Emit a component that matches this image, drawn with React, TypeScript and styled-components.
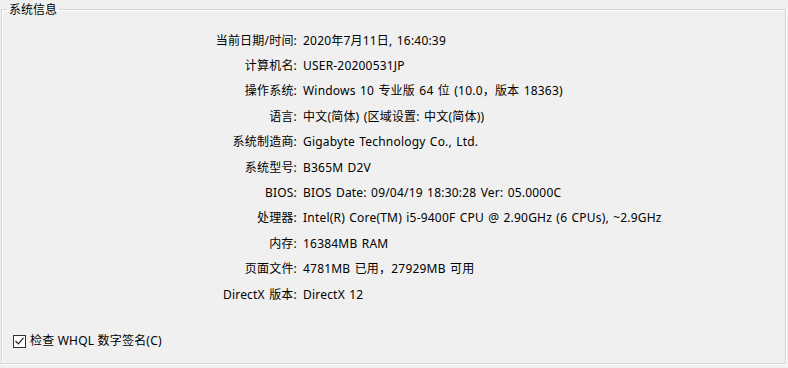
import { Fragment } from "react";
import styled, { createGlobalStyle } from "styled-components";

const GlobalStyle = createGlobalStyle`
    html, body {
        margin: 0;
        padding: 0;
        background: #f0f0f0;
    }
    body {
        width: 788px;
        height: 368px;
        overflow: hidden;
        font-family: "Noto Sans", "Noto Sans CJK SC", sans-serif;
        font-size: 12px;
        color: #000000;
    }
`;

const Page = styled.div`
    padding: 1px 2px 0 1px;
`;

const GroupBox = styled.fieldset`
    margin: 0;
    padding: 0;
    height: 363px;
    box-sizing: border-box;
    border: 1px solid #d7d7d7;
    box-shadow: 1px 1px 0 #ffffff, inset 1px 1px 0 #ffffff;
    display: flex;
    flex-direction: column;
`;

const GroupTitle = styled.legend`
    margin-left: 5px;
    padding: 0 2px;
    line-height: 16px;
    font-family: "Noto Sans CJK SC", sans-serif;
`;

const InfoGrid = styled.div`
    display: grid;
    grid-template-columns: 295px 1fr;
    grid-auto-rows: 25.4px;
    column-gap: 6px;
    align-items: center;
    margin-top: 11px;
    line-height: 16px;
    letter-spacing: 0.2px;
    word-spacing: 1px;
`;

const Label = styled.div`
    text-align: right;
    white-space: nowrap;
`;

const Value = styled.div`
    white-space: nowrap;
`;

const CheckRow = styled.label`
    display: flex;
    align-items: center;
    gap: 4px;
    margin: 26px 0 0 11px;
    line-height: 16px;
    letter-spacing: 0.2px;
`;

const CheckBox = styled.span`
    width: 11px;
    height: 11px;
    border: 1px solid #333333;
    background: #ffffff;
    display: flex;
    align-items: center;
    justify-content: center;
`;

const rows: [string, string][] = [
    ["当前日期/时间:", "2020年7月11日, 16:40:39"],
    ["计算机名:", "USER-20200531JP"],
    ["操作系统:", "Windows 10 专业版 64 位 (10.0，版本 18363)"],
    ["语言:", "中文(简体) (区域设置: 中文(简体))"],
    ["系统制造商:", "Gigabyte Technology Co., Ltd."],
    ["系统型号:", "B365M D2V"],
    ["BIOS:", "BIOS Date: 09/04/19 18:30:28 Ver: 05.0000C"],
    ["处理器:", "Intel(R) Core(TM) i5-9400F CPU @ 2.90GHz (6 CPUs), ~2.9GHz"],
    ["内存:", "16384MB RAM"],
    ["页面文件:", "4781MB 已用，27929MB 可用"],
    ["DirectX 版本:", "DirectX 12"],
];

function App() {
    return (
        <>
            <GlobalStyle />
            <Page>
                <GroupBox>
                    <GroupTitle>系统信息</GroupTitle>
                    <InfoGrid>
                        {rows.map(([label, value]) => (
                            <Fragment key={label}>
                                <Label>{label}</Label>
                                <Value>{value}</Value>
                            </Fragment>
                        ))}
                    </InfoGrid>
                    <CheckRow>
                        <CheckBox>
                            <svg width="9" height="8" viewBox="0 0 9 8">
                                <path d="M0.5 4 L3.3 6.8 L8.5 0.8" fill="none" stroke="#222" strokeWidth="1.2" />
                            </svg>
                        </CheckBox>
                        检查 WHQL 数字签名(C)
                    </CheckRow>
                </GroupBox>
            </Page>
        </>
    );
}

export default App;
